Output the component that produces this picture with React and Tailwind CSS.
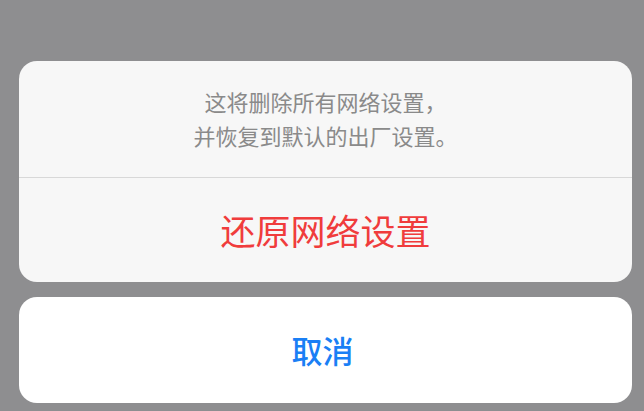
export default function App() {
  const cjk = { fontFamily: '"Noto Sans CJK SC", "Noto Sans", sans-serif' };
  return (
    <div
      className="w-[644px] h-[411px] bg-[#8e8e90] pt-[61px] pl-[19px] pr-[12px] flex flex-col gap-[15px] overflow-hidden"
      style={cjk}
    >
      {/* Action sheet: message + destructive action */}
      <div className="rounded-[18px] bg-[#f7f7f7] flex flex-col overflow-hidden">
        <div className="h-[116px] flex flex-col items-center justify-center text-[22px] leading-[34px] text-[#8a8a8a] pb-[2px]">
          <div>这将删除所有网络设置，</div>
          <div>并恢复到默认的出厂设置。</div>
        </div>
        <div className="h-px bg-[#d8d8d8]" />
        <div className="h-[104px] flex items-center justify-center text-[35px] text-[#f03c3c]">
          还原网络设置
        </div>
      </div>
      {/* Cancel button */}
      <div className="h-[106px] rounded-[18px] bg-white flex items-center justify-center text-[31px] font-medium text-[#1a7ff5] pr-[6px]">
        取消
      </div>
    </div>
  );
}
